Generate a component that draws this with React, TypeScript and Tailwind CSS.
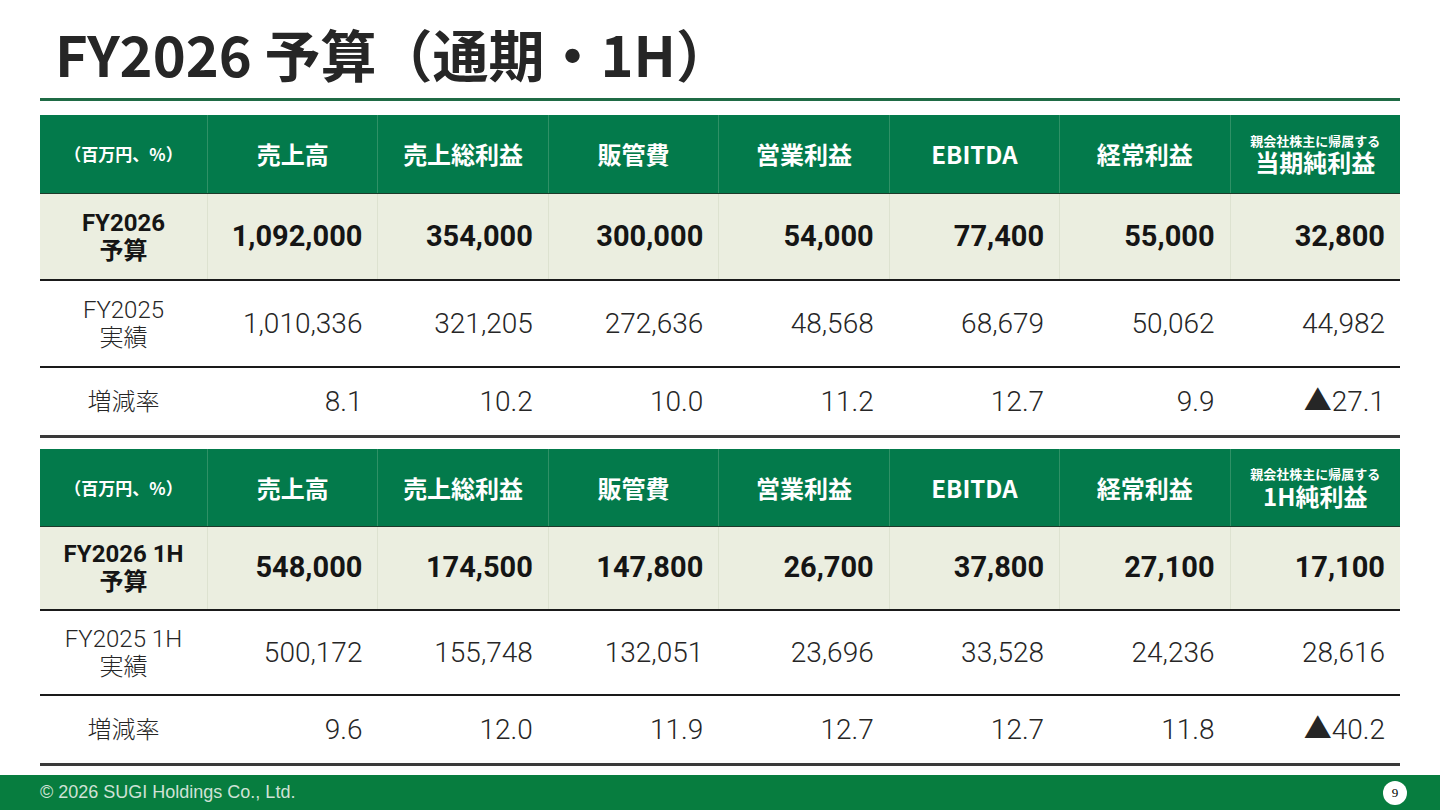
const headers = ['売上高', '売上総利益', '販管費', '営業利益', 'EBITDA', '経常利益'];

type Row = { label: string[]; values: string[]; kind: 'budget' | 'actual' | 'rate' };

type Table = { lastHead: string; heights: number[]; rows: Row[] };

const tables: Table[] = [
    {
        lastHead: '当期純利益',
        heights: [79, 87, 87, 70],
        rows: [
            { label: ['FY2026', '予算'], values: ['1,092,000', '354,000', '300,000', '54,000', '77,400', '55,000', '32,800'], kind: 'budget' },
            { label: ['FY2025', '実績'], values: ['1,010,336', '321,205', '272,636', '48,568', '68,679', '50,062', '44,982'], kind: 'actual' },
            { label: ['増減率'], values: ['8.1', '10.2', '10.0', '11.2', '12.7', '9.9', '▲27.1'], kind: 'rate' },
        ],
    },
    {
        lastHead: '1H純利益',
        heights: [78, 84, 85, 70],
        rows: [
            { label: ['FY2026 1H', '予算'], values: ['548,000', '174,500', '147,800', '26,700', '37,800', '27,100', '17,100'], kind: 'budget' },
            { label: ['FY2025 1H', '実績'], values: ['500,172', '155,748', '132,051', '23,696', '33,528', '24,236', '28,616'], kind: 'actual' },
            { label: ['増減率'], values: ['9.6', '12.0', '11.9', '12.7', '12.7', '11.8', '▲40.2'], kind: 'rate' },
        ],
    },
];

function DataTable({ table }: { table: Table }) {
    return (
        <div className="mx-[40px]">
            {/* header */}
            <div
                className="grid grid-cols-[167px_repeat(7,1fr)] bg-[#037a4b] text-white font-bold border-b border-[#1d3a2a]"
                style={{ height: table.heights[0] }}
            >
                <div className="flex items-center justify-center text-[17px]">（百万円、%）</div>
                {headers.map((h) => (
                    <div key={h} className="flex items-center justify-center border-l border-[#2f9166] text-[24px]">
                        {h}
                    </div>
                ))}
                <div className="flex flex-col items-center justify-center border-l border-[#2f9166] leading-tight">
                    <span className="text-[13px]">親会社株主に帰属する</span>
                    <span className="text-[24px] leading-[26px]">{table.lastHead}</span>
                </div>
            </div>

            {table.rows.map((row, i) => {
                const budget = row.kind === 'budget';
                const border = row.kind === 'rate' ? 'border-b-[3px] border-[#3a3a3a]' : 'border-b-2 border-[#1a1a1a]';
                return (
                    <div
                        key={i}
                        className={`grid grid-cols-[167px_repeat(7,1fr)] ${border} ${budget ? 'bg-[#ebeee0] font-bold text-[#151515]' : 'font-light text-[#262626]'} font-['Roboto','Noto_Sans_CJK_JP',sans-serif]`}
                        style={{ height: table.heights[i + 1] }}
                    >
                        <div className="flex flex-col items-center justify-center text-[24px] leading-[28px]">
                            {row.label.map((l) => (
                                <span key={l}>{l}</span>
                            ))}
                        </div>
                        {row.values.map((v, j) => (
                            <div
                                key={j}
                                className={`flex items-center justify-end pr-[15px] ${budget ? 'text-[29px] border-l border-[#dde2d0]' : 'text-[28px]'}`}
                            >
                                {v}
                            </div>
                        ))}
                    </div>
                );
            })}
        </div>
    );
}

export default function App() {
    return (
        <div className="w-[1440px] h-[810px] flex flex-col bg-white font-['Noto_Sans_CJK_JP',sans-serif] overflow-hidden">
            {/* Title */}
            <div className="h-[98px] flex items-end px-[55px] pb-[13px]">
                <h1 className="text-[56px] leading-[64px] font-bold text-[#262626]">FY2026 予算（通期・1H）</h1>
            </div>
            <div className="mx-[40px] h-[3px] bg-[#1f6b45]" />

            <div className="mt-[14px]">
                <DataTable table={tables[0]} />
            </div>
            <div className="mt-[11px]">
                <DataTable table={tables[1]} />
            </div>

            <div className="flex-1" />

            {/* Footer */}
            <div className="h-[35px] bg-[#077d3f] flex items-center justify-between pl-[40px] pr-[33px]">
                <span className="font-['Liberation_Sans',sans-serif] text-[18px] text-[#cfe2d6]">© 2026 SUGI Holdings Co., Ltd.</span>
                <span className="w-[24px] h-[24px] rounded-full bg-white flex items-center justify-center font-['Liberation_Serif',serif] text-[13px] text-black">
                    9
                </span>
            </div>
        </div>
    );
}
